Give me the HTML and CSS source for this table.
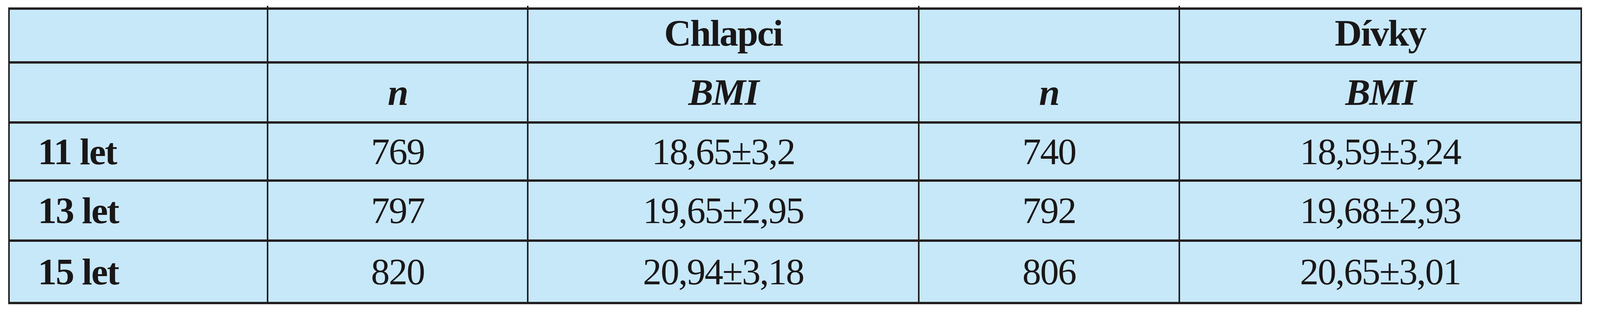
FILE: index.html
```html
<!DOCTYPE html>
<html lang="cs">
<head>
<meta charset="utf-8">
<title>BMI tabulka</title>
<link rel="stylesheet" href="styles.css">
</head>
<body>
<div class="page">
  <table class="bmi">
    <colgroup>
      <col class="c-age">
      <col class="c-n">
      <col class="c-bmi">
      <col class="c-n2">
      <col class="c-bmi2">
    </colgroup>
    <thead>
      <tr class="row-h1">
        <th class="age"></th>
        <th class="top"></th>
        <th class="top">Chlapci</th>
        <th class="top"></th>
        <th class="top">Dívky</th>
      </tr>
      <tr class="row-h2">
        <th class="age"></th>
        <th class="it">n</th>
        <th class="it">BMI</th>
        <th class="it">n</th>
        <th class="it">BMI</th>
      </tr>
    </thead>
    <tbody>
      <tr class="row-a">
        <th class="age">11 let</th>
        <td>769</td>
        <td>18,65±3,2</td>
        <td>740</td>
        <td>18,59±3,24</td>
      </tr>
      <tr class="row-b">
        <th class="age">13 let</th>
        <td>797</td>
        <td>19,65±2,95</td>
        <td>792</td>
        <td>19,68±2,93</td>
      </tr>
      <tr class="row-c last">
        <th class="age">15 let</th>
        <td>820</td>
        <td>20,94±3,18</td>
        <td>806</td>
        <td>20,65±3,01</td>
      </tr>
    </tbody>
  </table>
</div>
</body>
</html>
```

FILE: styles.css
```css
html, body {
  margin: 0;
  padding: 0;
  background: #ffffff;
}

.page {
  padding: 19px 0 0 21px;
}

.bmi {
  table-layout: fixed;
  width: 4029px;
  border-collapse: separate;
  border-spacing: 4px 6px;
  background: #231f20;
  font-family: "Liberation Serif", "Times New Roman", serif;
  font-size: 96px;
  letter-spacing: -2.5px;
  line-height: 1;
  color: #1a1718;
}

.c-age { width: 658px; }
.c-n { width: 662px; }
.c-bmi { width: 997px; }
.c-n2 { width: 663px; }
.c-bmi2 { width: 1025px; }

.bmi th,
.bmi td {
  background: #c7e8f9;
  padding: 0;
  text-align: center;
  vertical-align: middle;
  position: relative;
  font-weight: 400;
}

.bmi th {
  font-weight: 700;
}

.bmi th.age {
  text-align: left;
  padding-left: 72px;
}

.bmi th.it {
  font-style: italic;
}

.row-h1 { height: 132px; }
.row-h2 { height: 148px; }
.row-a { height: 143px; }
.row-b { height: 148px; }
.row-c { height: 154px; }

.row-h1 th {
  padding-bottom: 13px;
}

/* small tick marks where the column rules poke past the outer frame */
.row-h1 th.top::before {
  content: "";
  position: absolute;
  left: -4px;
  top: -10px;
  width: 4px;
  height: 6px;
  background: #231f20;
}

.last td::after {
  content: "";
  position: absolute;
  left: -4px;
  bottom: -10px;
  width: 4px;
  height: 6px;
  background: #231f20;
}
```
